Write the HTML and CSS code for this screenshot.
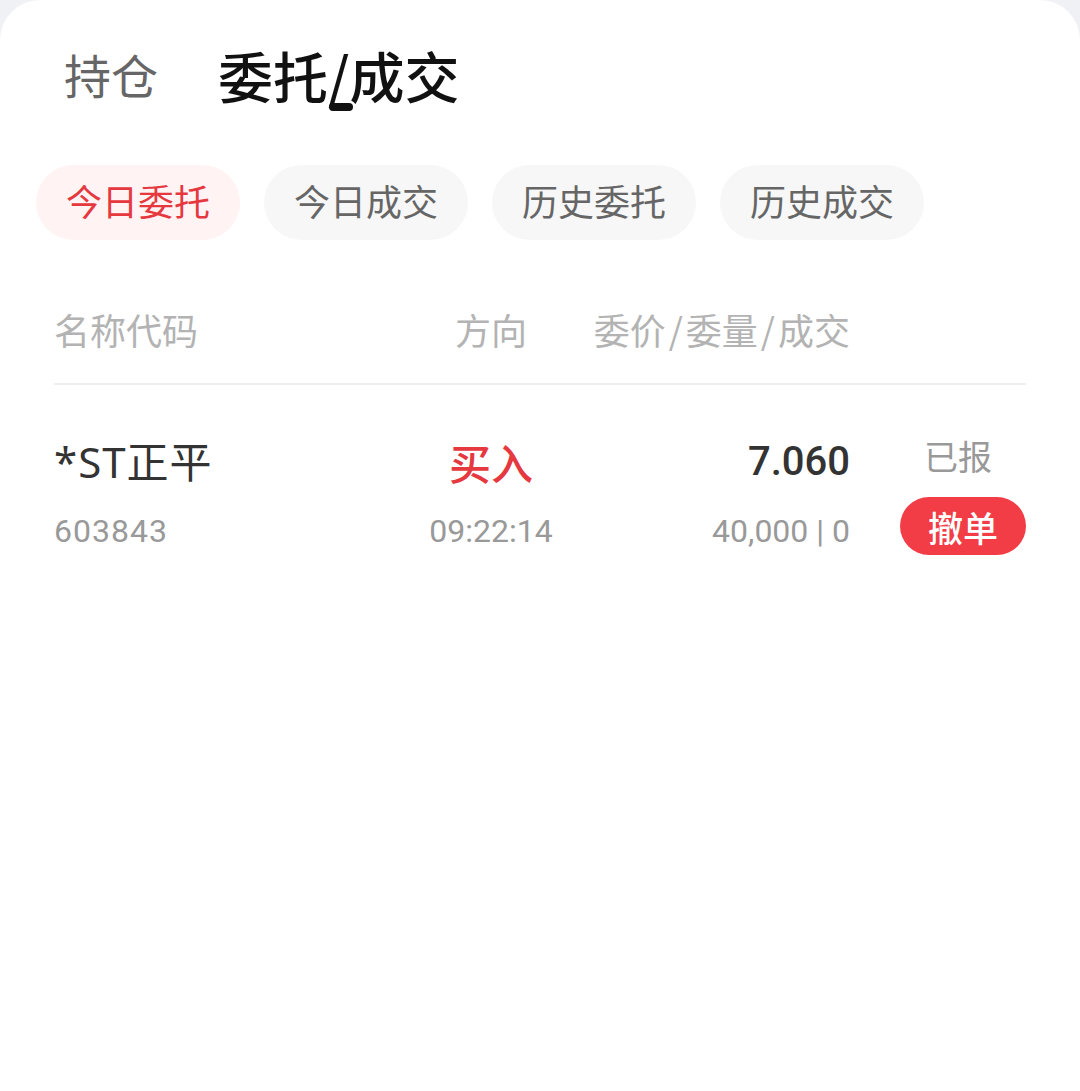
FILE: index.html
```html
<!DOCTYPE html>
<html lang="zh-CN">
<head>
  <meta charset="UTF-8" />
  <meta name="viewport" content="width=device-width, initial-scale=1" />
  <title>委托/成交</title>
  <link rel="stylesheet" href="styles.css">
</head>
<body>
  <div class="sheet">

    <!-- Top tabs -->
    <nav class="tabs">
      <a class="tab">持仓</a>
      <a class="tab active">委托/成交</a>
    </nav>

    <!-- Filter chips -->
    <div class="chips">
      <span class="chip active">今日委托</span>
      <span class="chip">今日成交</span>
      <span class="chip">历史委托</span>
      <span class="chip">历史成交</span>
    </div>

    <div class="table">
      <div class="row head">
        <div class="col-name">名称代码</div>
        <div class="col-dir">方向</div>
        <div class="col-price">委价<span class="sep">/</span>委量<span class="sep">/</span>成交</div>
        <div class="col-status"></div>
      </div>

      <div class="row order">
        <div class="col-name">
          <div class="name">*ST正平</div>
          <div class="sub code">603843</div>
        </div>
        <div class="col-dir">
          <div class="dir buy">买入</div>
          <div class="sub">09:22:14</div>
        </div>
        <div class="col-price">
          <div class="price">7.060</div>
          <div class="sub">40,000 | 0</div>
        </div>
        <div class="col-status">
          <div class="state">已报</div>
          <button class="cancel">撤单</button>
        </div>
      </div>
    </div>

  </div>
</body>
</html>
```

FILE: styles.css
```css
body {
  margin: 0;
  background: #f0f1f5;
  font-family: "Noto Sans CJK SC", "Noto Sans", sans-serif;
}
.sheet {
  background: #fff;
  border-radius: 40px 40px 0 0;
  min-height: 1091px;
  overflow: hidden;
}
.tabs {
  display: flex;
  align-items: center;
  gap: 60px;
  padding: 38px 0 0 64px;
  height: 72px;
}
.tab {
  position: relative;
  font-size: 47px;
  line-height: 70px;
  color: #666;
}
.tab.active {
  font-size: 55px;
  font-weight: 500;
  color: #111;
}
.tab.active::after {
  content: "";
  position: absolute;
  left: 50%;
  bottom: -2px;
  width: 24px;
  height: 8px;
  margin-left: -10px;
  border-radius: 4px;
  background: #111;
}
.chips {
  display: flex;
  gap: 24px;
  padding-left: 36px;
  margin-top: 55px;
}
.chip {
  width: 204px;
  height: 75px;
  line-height: 70px;
  text-align: center;
  border-radius: 38px;
  background: #f7f7f7;
  color: #666;
  font-size: 36px;
}
.chip.active {
  background: #fff3f3;
  color: #e5383f;
}
.table {
  margin: 50px 54px 0;
}
.row {
  display: grid;
  grid-template-columns: 346px 182px 268px 176px;
}
.row.head {
  height: 80px;
  line-height: 78px;
  padding-bottom: 13px;
  border-bottom: 2px solid #eeeeee;
  font-size: 36px;
  color: #b3b3b3;
}
.sep {
  margin: 0 3px;
}
.col-dir {
  text-align: center;
}
.col-price {
  text-align: right;
}
.col-status {
  display: flex;
  flex-direction: column;
  align-items: center;
  width: 126px;
  justify-self: end;
}
.order {
  padding-top: 49px;
}
.name {
  font-family: "Noto Sans", "Noto Sans CJK SC", sans-serif;
  font-size: 42px;
  line-height: 56px;
  letter-spacing: 1px;
  color: #333;
}
.dir {
  font-size: 42px;
  line-height: 56px;
  font-weight: 500;
}
.buy {
  color: #e5383f;
}
.price {
  font-family: Roboto, sans-serif;
  font-size: 40px;
  line-height: 56px;
  font-weight: 500;
  color: #333;
}
.sub {
  margin-top: 19px;
  font-family: Roboto, sans-serif;
  font-size: 32px;
  line-height: 44px;
  color: #999;
}
.sub.code {
  letter-spacing: 1px;
}
.state {
  margin-right: 10px;
  font-size: 34px;
  line-height: 44px;
  color: #999;
}
.cancel {
  margin-top: 19px;
  width: 126px;
  height: 58px;
  border: none;
  border-radius: 29px;
  background: #f23c46;
  color: #fff;
  font-family: "Noto Sans CJK SC", sans-serif;
  font-size: 35px;
  font-weight: 500;
  padding: 0;
}
```
